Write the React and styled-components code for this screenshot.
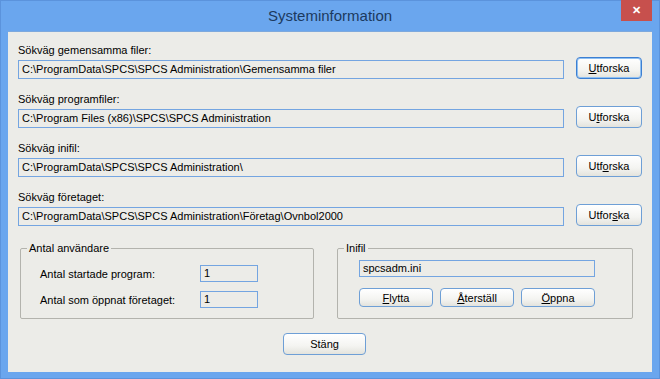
import styled, { createGlobalStyle } from "styled-components";

const GlobalStyle = createGlobalStyle`
  html, body {
    margin: 0;
    padding: 0;
    background: #6aa6ee;
  }
  body {
    font-family: "Liberation Sans", Arial, sans-serif;
    font-size: 11px;
    color: #000;
  }
`;

const Window = styled.div`
  width: 660px;
  height: 379px;
  background: #6aa6ee;
  display: flex;
  flex-direction: column;
  box-sizing: border-box;
  border: 1px solid #5b93dc;
`;

const TitleBar = styled.div`
  height: 30px;
  display: flex;
  align-items: flex-start;
  position: relative;
`;

const Title = styled.div`
  flex: 1;
  text-align: center;
  font-size: 15px;
  line-height: 29px;
  color: #1c3a5e;
`;

const CloseButton = styled.div`
  position: absolute;
  top: -1px;
  right: 7px;
  width: 31px;
  height: 21px;
  background: #c7504d;
  color: #fff;
  font-size: 11px;
  font-weight: bold;
  display: flex;
  align-items: center;
  justify-content: center;
`;

const Client = styled.div`
  margin: 0 7px 6px 7px;
  flex: 1;
  background: #ecece8;
  border-top: 1px solid #7ea9dd;
  padding: 11px 10px 0 10px;
  display: flex;
  flex-direction: column;
`;

const PathRow = styled.div`
  display: flex;
  flex-direction: column;
  margin-bottom: 13px;
`;

const Label = styled.div`
  height: 14px;
  line-height: 14px;
`;

const Line = styled.div`
  display: flex;
  align-items: flex-end;
  height: 22px;
`;

const Field = styled.div`
  box-sizing: border-box;
  width: ${(p) => p.$w}px;
  height: ${(p) => p.$h || 19}px;
  border: 1px solid #74a5e1;
  padding: 0 3px;
  line-height: ${(p) => (p.$h || 19) - 2}px;
  white-space: nowrap;
  overflow: hidden;
  background: #ecece8;
`;

const Button = styled.div`
  box-sizing: border-box;
  width: ${(p) => p.$w}px;
  height: ${(p) => p.$h || 22}px;
  border: 1px solid ${(p) => (p.$focus ? "#3c7fd2" : "#6e9fd6")};
  box-shadow: ${(p) => (p.$focus ? "inset 0 0 0 1px #8fc0f2" : "none")};
  border-radius: 4px;
  background: linear-gradient(#ffffff, #f4f4f1 60%, #e3e3dd);
  display: flex;
  align-items: center;
  justify-content: center;
  margin-left: ${(p) => p.$ml || 0}px;
`;

const Groups = styled.div`
  display: flex;
  gap: 23px;
  margin: 3px 0 0 2px;
`;

const Group = styled.fieldset`
  margin: 0;
  width: ${(p) => p.$w}px;
  box-sizing: border-box;
  border: 1px solid #b3b3ad;
  border-radius: 2px;
  padding: ${(p) => p.$pt}px 6px 10px 6px;
`;

const Legend = styled.legend`
  padding: 0 2px;
  line-height: 13px;
`;

const CountRow = styled.div`
  display: flex;
  align-items: center;
  padding-left: 13px;
  margin-top: ${(p) => (p.$first ? 0 : 9)}px;
`;

const CountLabel = styled.div`
  width: 160px;
`;

const IniBody = styled.div`
  padding-left: 15px;
  display: flex;
  flex-direction: column;
`;

const IniButtons = styled.div`
  display: flex;
  gap: 7px;
  margin-top: 11px;
`;

const Footer = styled.div`
  display: flex;
  justify-content: center;
  padding-right: 11px;
  margin-top: 14px;
`;

const Key = styled.span`
  text-decoration: underline;
`;

const paths = [
  {
    label: "Sökväg gemensamma filer:",
    value: "C:\\ProgramData\\SPCS\\SPCS Administration\\Gemensamma filer",
    btn: ["", "U", "tforska"],
    focus: true,
  },
  {
    label: "Sökväg programfiler:",
    value: "C:\\Program Files (x86)\\SPCS\\SPCS Administration",
    btn: ["U", "t", "forska"],
  },
  {
    label: "Sökväg inifil:",
    value: "C:\\ProgramData\\SPCS\\SPCS Administration\\",
    btn: ["Utf", "o", "rska"],
  },
  {
    label: "Sökväg företaget:",
    value: "C:\\ProgramData\\SPCS\\SPCS Administration\\Företag\\Ovnbol2000",
    btn: ["Utfor", "s", "ka"],
  },
];

export default function App() {
  return (
    <>
      <GlobalStyle />
      <Window>
        <TitleBar>
          <Title>Systeminformation</Title>
          <CloseButton>✕</CloseButton>
        </TitleBar>
        <Client>
          {paths.map((p) => (
            <PathRow key={p.label}>
              <Label>{p.label}</Label>
              <Line>
                <Field $w={546}>{p.value}</Field>
                <Button $w={66} $ml={12} $focus={p.focus}>
                  {p.btn[0]}
                  <Key>{p.btn[1]}</Key>
                  {p.btn[2]}
                </Button>
              </Line>
            </PathRow>
          ))}
          <Groups>
            <Group $w={294} $pt={10}>
              <Legend>Antal användare</Legend>
              <CountRow $first>
                <CountLabel>Antal startade program:</CountLabel>
                <Field $w={58} $h={17}>1</Field>
              </CountRow>
              <CountRow>
                <CountLabel>Antal som öppnat företaget:</CountLabel>
                <Field $w={58} $h={17}>1</Field>
              </CountRow>
            </Group>
            <Group $w={296} $pt={5}>
              <Legend>Inifil</Legend>
              <IniBody>
                <Field $w={236} $h={17}>spcsadm.ini</Field>
                <IniButtons>
                  <Button $w={74} $h={19}>
                    <Key>F</Key>lytta
                  </Button>
                  <Button $w={74} $h={19}>
                    <Key>Å</Key>terställ
                  </Button>
                  <Button $w={74} $h={19}>
                    <Key>Ö</Key>ppna
                  </Button>
                </IniButtons>
              </IniBody>
            </Group>
          </Groups>
          <Footer>
            <Button $w={83}>Stäng</Button>
          </Footer>
        </Client>
      </Window>
    </>
  );
}
